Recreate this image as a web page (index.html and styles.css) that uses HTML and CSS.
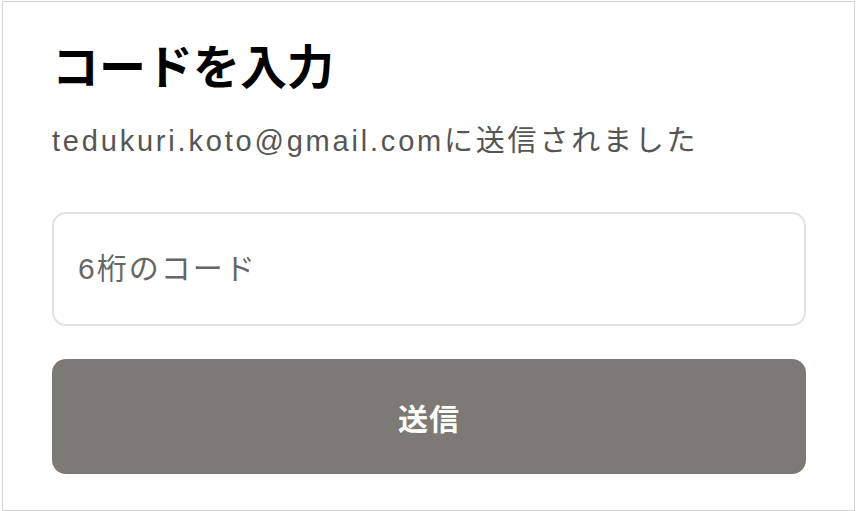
FILE: index.html
```html
<!DOCTYPE html>
<html lang="ja">
<head>
  <meta charset="UTF-8" />
  <title>コードを入力</title>
  <link rel="stylesheet" href="styles.css">
</head>
<body>

  <!-- CODE FORM -->
  <div class="frame">
    <h1 class="title">コードを入力</h1>
    <p class="sentTo">tedukuri.koto@gmail.comに送信されました</p>

    <form class="codeForm">
      <input class="codeInput" type="text" placeholder="6桁のコード" />
      <button class="sendBtn" type="button">送信</button>
    </form>
  </div>

</body>
</html>
```

FILE: styles.css
```css
/* RESET */
* {
  margin: 0;
  padding: 0;
  box-sizing: border-box;
}

body {
  background-color: #fff;
  font-family: "Liberation Sans", "Noto Sans CJK JP", sans-serif;
  color: #000;
  padding: 1px 1px 1px 2px;
}

/* Outer card */
.frame {
  height: 510px;
  border: 1px solid #d4d4d4;
  padding: 38px 48px 0 49px;
}

.title {
  font-size: 47px;
  font-weight: bold;
  line-height: 56px;
  color: #000;
}

.sentTo {
  margin-top: 25px;
  font-size: 29px;
  line-height: 40px;
  letter-spacing: 2.8px;
  color: #555;
}

/* Input + button */
.codeForm {
  margin-top: 51px;
  display: flex;
  flex-direction: column;
  gap: 33px;
}

.codeInput {
  height: 114px;
  border: 2px solid #e2e2e2;
  border-radius: 14px;
  padding: 0 24px;
  font-family: inherit;
  font-size: 30px;
  letter-spacing: 2px;
  color: #333;
  outline: none;
}
.codeInput::placeholder {
  color: #666;
}

.sendBtn {
  height: 115px;
  background-color: #7d7975;
  color: #fff;
  border: none;
  border-radius: 14px;
  font-family: inherit;
  font-size: 30px;
  font-weight: bold;
  letter-spacing: 1px;
  cursor: pointer;
}
```
